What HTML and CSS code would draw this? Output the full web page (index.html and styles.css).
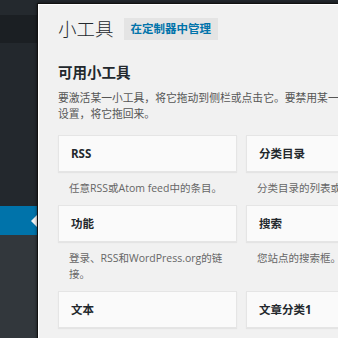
FILE: index.html
```html
<!DOCTYPE html>
<html lang="zh-CN">
<head>
<meta charset="utf-8">
<title>小工具</title>
<link rel="stylesheet" href="styles.css">
</head>
<body>
<div class="sidebar">
  <div class="sb-top"></div>
  <div class="sb-hover"></div>
  <div class="sb-menu"></div>
  <div class="sb-current"></div>
  <div class="sb-sub"></div>
</div>
<div class="main"></div>
<div class="modal">
  <div class="modal-head">
    <h1 class="modal-title">小工具</h1>
    <span class="btn">在定制器中管理</span>
  </div>
  <h2 class="section-title">可用小工具</h2>
  <p class="help">要激活某一小工具，将它拖动到侧栏或点击它。要禁用某一小工具并删除其设置，将它拖回来。</p>
  <div class="widgets">
    <div class="widget">
      <div class="w-title">RSS</div>
      <div class="w-desc">任意RSS或Atom feed中的条目。</div>
    </div>
    <div class="widget">
      <div class="w-title">分类目录</div>
      <div class="w-desc">分类目录的列表或下拉菜单。</div>
    </div>
    <div class="widget">
      <div class="w-title">功能</div>
      <div class="w-desc">登录、RSS和WordPress.org的链接。</div>
    </div>
    <div class="widget">
      <div class="w-title">搜索</div>
      <div class="w-desc">您站点的搜索框。</div>
    </div>
    <div class="widget">
      <div class="w-title">文本</div>
      <div class="w-desc">任意文本或HTML。</div>
    </div>
    <div class="widget">
      <div class="w-title">文章分类1</div>
      <div class="w-desc">文章分类。</div>
    </div>
  </div>
</div>
</body>
</html>
```
FILE: styles.css
```css
html, body {
  margin: 0;
  padding: 0;
  width: 338px;
  height: 338px;
  overflow: hidden;
}
body {
  display: flex;
  background: #23282d;
  font-family: "Open Sans", "Noto Sans CJK SC", sans-serif;
  position: relative;
}
.sidebar {
  width: 37px;
  height: 338px;
  display: flex;
  flex-direction: column;
  flex: none;
}
.sb-top { height: 15px; background: #24292e; }
.sb-hover { height: 28px; background: #1b1f23; }
.sb-menu { height: 163px; background: #23282d; }
.sb-current {
  height: 29px;
  background: #0073aa;
  position: relative;
}
.sb-current::after {
  content: "";
  position: absolute;
  right: 0;
  top: 50%;
  margin-top: -6px;
  border: 6px solid transparent;
  border-right-color: #f1f1f1;
  border-left-width: 0;
}
.sb-sub { flex: 1; background: #32373c; }
.main { flex: 1; background: #23282d; }

.modal {
  position: absolute;
  left: 37px;
  top: 3px;
  width: 420px;
  height: 420px;
  background: #f1f1f1;
  border: 1px solid #111;
  box-shadow: inset 1px 1px 0 #fff, 0 0 3px rgba(0,0,0,.6);
  padding: 14px 0 0 20px;
  box-sizing: border-box;
  z-index: 2;
}
.modal-head {
  display: flex;
  align-items: center;
  height: 22px;
}
.modal-title {
  margin: 0;
  font-size: 18.5px;
  font-weight: 300;
  line-height: 22px;
  color: #23282d;
}
.btn {
  margin-left: 10px;
  height: 22px;
  line-height: 22px;
  padding: 0 7px;
  background: #e4e4e4;
  color: #0073aa;
  font-size: 11.5px;
  font-weight: 700;
}
.section-title {
  margin: 23px 0 0;
  font-size: 14.5px;
  line-height: 20px;
  font-weight: 700;
  color: #23282d;
}
.help {
  margin: 7px 0 0;
  width: 362px;
  font-size: 10.8px;
  line-height: 16px;
  color: #555;
}
.widgets {
  margin-top: 13px;
  display: grid;
  grid-template-columns: 179px 179px;
  column-gap: 9px;
}
.widget {
  display: flex;
  flex-direction: column;
}
.w-title {
  height: 35px;
  line-height: 35px;
  background: #fafafa;
  border: 1px solid #e5e5e5;
  box-shadow: 0 1px 1px rgba(0,0,0,.05);
  padding: 0 12px;
  font-size: 11.5px;
  font-weight: 700;
  color: #23282d;
}
.w-desc {
  padding: 8px 11px 9px;
  font-size: 10.5px;
  line-height: 16px;
  color: #666;
}
```
